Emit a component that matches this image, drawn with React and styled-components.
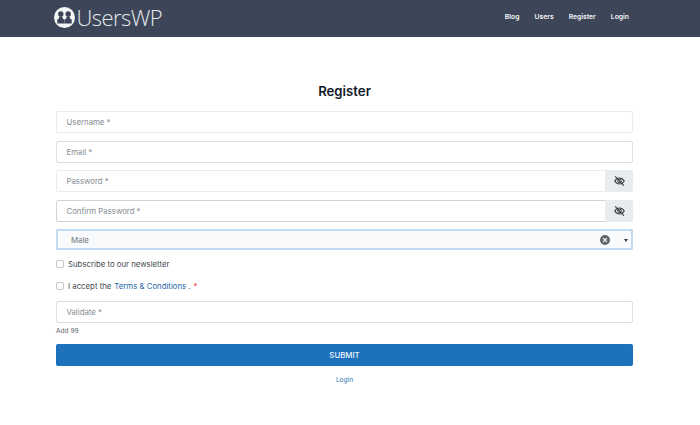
import React from "react";
import styled, { createGlobalStyle } from "styled-components";

const Global = createGlobalStyle`
  html, body { margin: 0; padding: 0; background: #fff; }
  body { font-family: Inter, "Liberation Sans", sans-serif; color: #212529; }
  * { box-sizing: border-box; }
`;

const Page = styled.div`
  width: 700px;
  height: 425px;
  overflow: hidden;
  background: #fff;
`;

const Header = styled.header`
  height: 37px;
  background: #3c4658;
  display: flex;
  align-items: center;
  justify-content: space-between;
  padding: 0 71px 0 54px;
`;

const Brand = styled.div`
  display: flex;
  align-items: center;
  gap: 1.5px;
  margin-top: -3px;
`;

const BrandName = styled.span`
  font-family: "Open Sans", Lato, sans-serif;
  font-weight: 300;
  font-size: 22px;
  line-height: 30px;
  letter-spacing: -0.55px;
  color: #e6e9ed;
`;

const Nav = styled.nav`
  display: flex;
  gap: 15px;
  margin-top: -3px;
`;

const NavLink = styled.a`
  font-family: Inter, sans-serif;
  font-size: 6.8px;
  font-weight: 600;
  color: #f3f4f6;
  line-height: 12px;
`;

const Main = styled.main`
  width: 577px;
  margin-left: 56px;
`;

const Title = styled.h1`
  margin: 45px 0 11.3px;
  height: 18px;
  font-family: Inter, sans-serif;
  font-size: 13.2px;
  line-height: 18px;
  font-weight: 600;
  text-align: center;
  color: #111827;
`;

const Form = styled.form`
  display: flex;
  flex-direction: column;
  gap: 7.6px;
`;

const Field = styled.div`
  height: 21.9px;
  display: flex;
  align-items: center;
  background: #fff;
  border: 1px solid ${(p) => p.$border || "#dcdfe3"};
  border-radius: 2px;
  padding-left: 9.5px;
  font-size: 7.8px;
  line-height: 12px;
  color: #868c93;
  font-family: Inter, sans-serif;
`;

const FieldText = styled.span`
  flex: 1;
  padding-top: 0.4px;
`;

const Addon = styled.div`
  width: 28px;
  align-self: stretch;
  margin: -1px -1px -1px 0;
  background: #e9ecef;
  border-radius: 0 2px 2px 0;
  display: flex;
  align-items: center;
  justify-content: center;
`;

const Select = styled.div`
  height: 20.9px;
  display: flex;
  align-items: center;
  background: #f9fafb;
  border: 2px solid #bfdcf6;
  border-radius: 1px;
  padding: 1px 3px 0 13px;
  font-size: 7.8px;
  color: #70767d;
`;

const Clear = styled.span`
  width: 10px;
  height: 10px;
  border-radius: 50%;
  background: #5f6469;
  display: flex;
  align-items: center;
  justify-content: center;
  margin-right: 14px;
`;

const Caret = styled.span`
  width: 0;
  height: 0;
  border-left: 2px solid transparent;
  border-right: 2px solid transparent;
  border-top: 3px solid #343a40;
`;

const CheckRow = styled.label`
  display: flex;
  align-items: center;
  gap: 4px;
  height: 14px;
  margin-top: -0.4px;
  font-size: 7.8px;
  color: #454b53;
`;

const CheckBox = styled.span`
  width: 8px;
  height: 8px;
  background: #fff;
  border: 1px solid #c4c8cd;
  border-radius: 2px;
`;

const TextLink = styled.a`
  color: #1f6aa8;
  margin: 0 2px 0 3px;
`;

const Required = styled.span`
  color: #dc3545;
  margin-left: 3px;
`;

const ValidateGroup = styled.div`
  display: flex;
  flex-direction: column;
  margin-top: 0.9px;
`;

const Hint = styled.div`
  margin-top: 3px;
  font-size: 6.6px;
  line-height: 10px;
  color: #5a6068;
`;

const Submit = styled.button`
  height: 22px;
  margin-top: 0.5px;
  background: #1e72bd;
  border: 0;
  border-radius: 2px;
  color: #f4f7fb;
  font-family: Inter, sans-serif;
  font-size: 7.8px;
  font-weight: 500;
`;

const Footer = styled.div`
  margin-top: 7px;
  text-align: center;
  font-size: 6.6px;
  line-height: 14px;
  color: #2f74ae;
`;

const LogoMark = () => (
  <svg width="21" height="21" viewBox="0 0 21 21" aria-hidden="true">
    <circle cx="10.5" cy="10.5" r="10.5" fill="#f4f5f6" />
    <circle cx="6.8" cy="7" r="2.7" fill="#3c4658" />
    <circle cx="14.2" cy="7" r="2.7" fill="#3c4658" />
    <path d="M5.2 9.5h3.2l.4 2.2 1.7.9v3.9H3.3v-3.9l1.6-.9z" fill="#3c4658" />
    <path d="M12.6 9.5h3.2l.3 2.2 1.6.9v3.9h-7.2v-3.9l1.7-.9z" fill="#3c4658" />
  </svg>
);

const EyeOff = () => (
  <svg width="11" height="10" viewBox="0 0 24 22" fill="none" stroke="#3f4349" strokeWidth="2.4" strokeLinecap="round" aria-hidden="true">
    <path d="M1.5 11S5.5 4.5 12 4.5 22.5 11 22.5 11 18.5 17.5 12 17.5 1.5 11 1.5 11z" />
    <circle cx="12" cy="11" r="3.8" />
    <path d="M3 1.5l18 19" />
  </svg>
);

const ClearX = () => (
  <svg width="6" height="6" viewBox="0 0 6 6" stroke="#e9ecef" strokeWidth="1.1" aria-hidden="true">
    <path d="M1 1l4 4M5 1L1 5" />
  </svg>
);

export default function App() {
  return (
    <Page>
      <Global />
      <Header>
        <Brand>
          <LogoMark />
          <BrandName>UsersWP</BrandName>
        </Brand>
        <Nav>
          <NavLink>Blog</NavLink>
          <NavLink>Users</NavLink>
          <NavLink>Register</NavLink>
          <NavLink>Login</NavLink>
        </Nav>
      </Header>
      <Main>
        <Title>Register</Title>
        <Form>
          <Field $border="#e9ebee"><FieldText>Username *</FieldText></Field>
          <Field><FieldText>Email *</FieldText></Field>
          <Field $border="#e9ebee">
            <FieldText>Password *</FieldText>
            <Addon><EyeOff /></Addon>
          </Field>
          <Field $border="#cfd3d8">
            <FieldText>Confirm Password *</FieldText>
            <Addon><EyeOff /></Addon>
          </Field>
          <Select>
            <FieldText>Male</FieldText>
            <Clear><ClearX /></Clear>
            <Caret />
          </Select>
          <CheckRow><CheckBox />Subscribe to our newsletter</CheckRow>
          <CheckRow>
            <CheckBox />
            <span>I accept the<TextLink>Terms &amp; Conditions</TextLink>.<Required>*</Required></span>
          </CheckRow>
          <ValidateGroup>
            <Field><FieldText>Validate *</FieldText></Field>
            <Hint>Add 99</Hint>
          </ValidateGroup>
          <Submit type="button">SUBMIT</Submit>
        </Form>
        <Footer>Login</Footer>
      </Main>
    </Page>
  );
}
